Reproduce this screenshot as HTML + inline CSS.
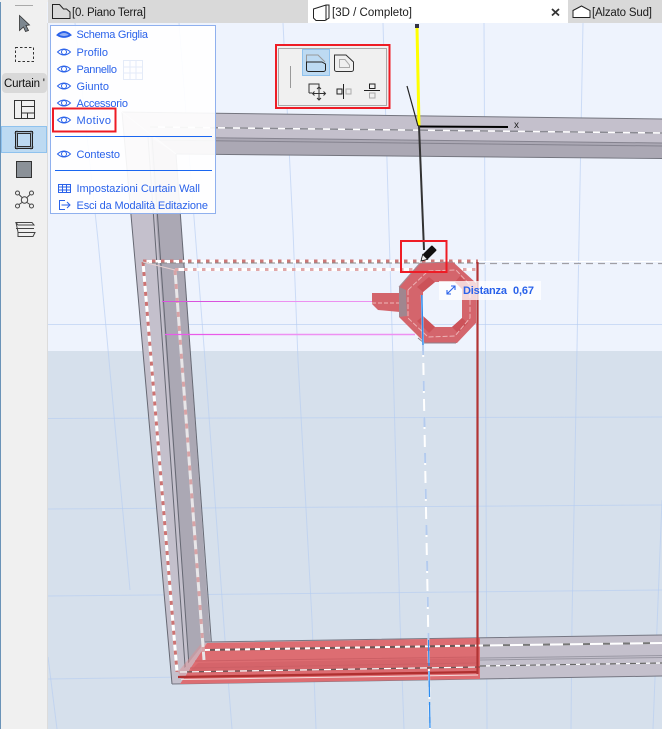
<!DOCTYPE html>
<html>
<head>
<meta charset="utf-8">
<style>
html,body{margin:0;padding:0;background:#eef3fd;width:662px;height:729px;overflow:hidden}
svg{display:block;position:absolute;left:0;top:0}
text{font-family:"Liberation Sans",sans-serif}
.m{font-size:11px;fill:#2a62ea}
.t{font-size:11.5px;fill:#1c1c1c}
</style>
</head>
<body>
<svg width="662" height="729" viewBox="0 0 662 729" xmlns="http://www.w3.org/2000/svg">
<rect width="662" height="729" fill="#eef3fd"/>
<rect y="351" width="662" height="378" fill="#d6e0ec"/>
<g stroke="#b4cbf2" stroke-width="1" stroke-opacity=".6" fill="none">
<path d="M75,23 L98,240 L130,590"/>
<path d="M48,657 L57,729"/>
<path d="M179,23 L205,360 L225,640 L232,729"/>
<path d="M283,23 L293,230 L298,360 L312,620 L316,729"/>
<path d="M383,23 L389,230 L393,360 L400,620 L404,729"/>
<path d="M484,23 L485,230 L487,729"/>
<path d="M583,23 L572,620 L571,729"/>
<path d="M662,500 L653,729"/>
<path d="M48,324.500 H662"/>
<path d="M48,418.500 L662,417"/>
<path d="M48,509 L662,505"/>
<path d="M48,596 L662,590"/>
<path d="M48,679 L662,670"/>
</g>
<!-- top band -->
<polygon points="122,112 662,119 662,158 176,154" fill="#c4c0cc"/>
<polygon points="150,137 662,143 662,158 176,154" fill="#aba8b4"/>
<path d="M122,112 L662,119" stroke="#74757f" stroke-width="1" fill="none"/>
<path d="M176,154 L662,158.500" stroke="#74757f" stroke-width="1" fill="none"/>
<path d="M150,137 L662,143 M150,140 L662,146" stroke="#85838f" stroke-width="1" fill="none"/>
<path d="M150,127 L662,133" stroke="#fff" stroke-width="1.500" fill="none"/>
<path d="M150,127 L662,133" stroke="#8a8a92" stroke-width="1.500" stroke-dasharray="8 7" fill="none"/>
<!-- left leg -->
<polygon points="122,112 176,154 211,650 213,676 172,684" fill="#c4c0cc"/>
<polygon points="150,137 176,154 211,650 213,676 190,680" fill="#aba8b4"/>
<g stroke="#666873" stroke-width="1" fill="none">
<path d="M122,112 L172,684"/>
<path d="M176,154 L213,665"/>
<path d="M148,137 L186,680 M152,137 L190,680"/>
</g>
<path d="M122,112 L176,154" stroke="#d9d6de" stroke-width="1"/>
<!-- bottom band -->
<polygon points="205,642 662,635 662,676 172,684" fill="#c4c0cc"/>
<path d="M205,642 L662,635 M172,684 L662,676" stroke="#767783" stroke-width="1" fill="none"/>
<path d="M480,658 L662,655.500 M480,660 L662,657.500" stroke="#9a98a4" stroke-width="1" fill="none"/>
<path d="M480,666 L662,663" stroke="#fff" stroke-width="1.200" fill="none"/>
<path d="M480,666 L662,663" stroke="#666" stroke-width="1.200" stroke-dasharray="6 4" fill="none"/>
<path d="M480,645.500 L662,643" stroke="#fff" stroke-width="2" fill="none"/>
<path d="M480,645.500 L662,643" stroke="#777" stroke-width="2" stroke-dasharray="7 13" stroke-dashoffset="-3" fill="none"/>
<!-- red floor -->
<polygon points="207,643 480,638 480,679 180,684" fill="#dd6d72"/>
<polygon points="198,663 478,658 478,668 188,673" fill="#d5646a"/>
<path d="M195,661 L478,657 M190,668 L478,663" stroke="#cc5f65" stroke-width="1" fill="none"/>
<polygon points="207,643 182,680 178,672 200,645" fill="#e08d91" opacity=".45"/>
<path d="M205,650 L480,645.500" stroke="#6a5555" stroke-width="2" fill="none"/>
<path d="M205,650 L480,645.500" stroke="#fff" stroke-width="2" stroke-dasharray="5 5" fill="none"/>
<path d="M180,672 L480,667" stroke="#6a5555" stroke-width="1.200" fill="none"/>
<path d="M180,672 L480,667" stroke="#fff" stroke-width="1.200" stroke-dasharray="7 5" fill="none"/>
<path d="M178,677 L478,672" stroke="#b03030" stroke-width="2.200" fill="none"/>
<path d="M181,679.500 L478,675" stroke="#f4dcdc" stroke-width="1" fill="none"/>
<!-- dashed outline -->
<path d="M143,262 L177,672" stroke="#fff" stroke-width="3" fill="none"/>
<path d="M143,262 L177,672" stroke="#cc7373" stroke-width="3" stroke-dasharray="4 6" fill="none"/>
<path d="M175,270 L204,660" stroke="#e8e6e8" stroke-width="3" fill="none"/>
<path d="M175,270 L204,660" stroke="#d8a3a6" stroke-width="3" stroke-dasharray="5 9" fill="none"/>
<path d="M143,261.500 H478" stroke="#fff" stroke-width="3" fill="none"/>
<path d="M478,261.500 H662" stroke="#fff" stroke-width="1" fill="none"/>
<path d="M478,264 H662" stroke="#eef3fd" stroke-width="2" fill="none"/>
<path d="M478,263.500 H662" stroke="#a09fa6" stroke-width="1.200" stroke-dasharray="7 5" fill="none"/>
<path d="M143,263 H478" stroke="#888" stroke-width="1" stroke-dasharray="6 3" fill="none"/>
<path d="M143,261 H478" stroke="#cc7878" stroke-width="3" stroke-dasharray="3.500 5.500" fill="none"/>
<path d="M175,269.500 H478" stroke="#fff" stroke-width="3" fill="none"/>
<path d="M175,269.500 H478" stroke="#e0a8aa" stroke-width="3" stroke-dasharray="3.500 5.500" fill="none"/>
<path d="M143,262 L175,270" stroke="#e6cfd0" stroke-width="1" fill="none"/>
<!-- pink -->
<path d="M162,301.500 H240" stroke="#d952dd" stroke-width="1"/>
<path d="M240,301.500 H372" stroke="#ec90f0" stroke-width="1"/>
<path d="M165,334.500 H250" stroke="#e95ae9" stroke-width="1.200"/>
<path d="M250,334.500 H415" stroke="#ee90f2" stroke-width="1.500"/>
<!-- vertical red -->
<path d="M477.500,262 V674" stroke="#b23434" stroke-width="2.200"/>
<!-- profile -->
<polygon points="372,293 400,293 400,312 378,310 372,304" fill="#d3646b"/>
<path d="M372,303 H400" stroke="#efb7ba" stroke-width="1" stroke-dasharray="4 2"/>
<path fill-rule="evenodd" d="M420,263 L453,262 L476,283 L476,323 L457,343 L425,343 L399,317 L399,287 Z M435,282 L455,282 L462,289 L462,318 L452,327 L435,327 L423,316 L423,292 Z" fill="#d4656c"/>
<polygon points="399,287 406,290 407,316 399,317" fill="#a0868f"/>
<polygon points="423,292 417,287 429,277 435,282" fill="#cc5259"/>
<polygon points="462,318 468,323 458,333 452,327" fill="#cc5259"/>
<polygon points="423,316 417,321 429,333 435,327" fill="#cc5259"/>
<polygon points="462,289 468,284 460,276 455,282" fill="#cc5259"/>
<path d="M408,290 L428,271 L456,270 L470,285 L470,318 L455,336 L428,337 L408,318 Z" fill="none" stroke="#edb3b6" stroke-width="1" stroke-dasharray="5 2"/>
<path d="M456,343 L424,343 L418,338" stroke="#8d7f8a" stroke-width="1" fill="none"/>
<path d="M399,287 L420,263 L453,262" stroke="#a48d96" stroke-width="1" fill="none"/>
<!-- blue axis -->
<path d="M421.800,295 L423,345" stroke="#fff" stroke-width="2"/>
<path d="M423,345 L430,729" stroke="#fff" stroke-width="2" stroke-dasharray="12 6"/>
<path d="M421.800,295 L423,345" stroke="#2c8cf0" stroke-width="1.500"/>
<path d="M423,345 L428.500,640" stroke="#b4cbee" stroke-width="2" stroke-dasharray="10 26"/>
<path d="M428.500,640 L430,729" stroke="#2c8cf0" stroke-width="1.300" stroke-dasharray="26 5"/>
<!-- axes -->
<path d="M417,28 L419,126" stroke="#ffff00" stroke-width="3"/>
<rect x="415" y="24" width="4" height="4" fill="#334"/>
<path d="M407,86 L418,126" stroke="#222" stroke-width="1.200"/>
<path d="M418,126.500 L508,127" stroke="#000" stroke-width="2"/>
<path d="M419,126 L424,250" stroke="#333" stroke-width="2"/>
<text x="514" y="128" font-size="10" fill="#222">x</text>
<!-- pencil -->
<g transform="translate(428,254) rotate(45)">
<rect x="-3.500" y="-9" width="7" height="13" rx="1" fill="#111"/>
<polygon points="-3.500,4 3.500,4 0,10" fill="#eee" stroke="#111" stroke-width=".8"/>
</g>
<rect x="401" y="241" width="45.500" height="31" fill="none" stroke="#ee1c25" stroke-width="2"/>
<!-- tooltip -->
<rect x="439" y="281" width="102" height="19" fill="#fff" opacity=".75"/>
<path d="M447,294 L455,286 M451,286 H455 V290 M447,290 V294 H451" stroke="#2a62ea" stroke-width="1.100" fill="none"/>
<text x="463" y="294" font-size="11" font-weight="bold" fill="#2a62ea" textLength="44">Distanza</text>
<text x="513" y="294" font-size="11" font-weight="bold" fill="#2a62ea" textLength="21">0,67</text>
<!-- tool palette -->
<rect x="276" y="45" width="113.500" height="63" fill="#f0f0f0" stroke="#ee1c25" stroke-width="2"/>
<rect x="278.500" y="48.500" width="108" height="57" fill="#f0f0f0" stroke="#a9a9a9" stroke-width="1"/>
<rect x="302.500" y="49.500" width="27" height="26" fill="#bddaf2" stroke="#8fc2ee"/>
<path d="M290.500,66 V88" stroke="#999" stroke-width="1"/>
<path d="M306.500,62 V55 H318 L325,62" fill="none" stroke="#999" stroke-width="1"/>
<path d="M306.500,62 H322 L325.500,64 V69.500 a2,2 0 0 1 -2,2 H308.500 a2,2 0 0 1 -2,-2 Z" fill="none" stroke="#222" stroke-width="1"/>
<path d="M334.500,55 H346 L353.500,62 V69.500 a2,2 0 0 1 -2,2 H336.500 a2,2 0 0 1 -2,-2 Z" fill="none" stroke="#333" stroke-width="1"/>
<path d="M339.500,59.500 H345 L349.500,65 V67.500 H339.500 Z" fill="none" stroke="#aaa" stroke-width="1"/>
<path d="M309,93 V84 H319 V88 M309,93 H312" fill="none" stroke="#333" stroke-width="1"/>
<path d="M319,87 V100 M312.500,93.500 H325.500 M317,89 L319,87 L321,89 M317,98 L319,100 L321,98 M314.500,91.500 L312.500,93.500 L314.500,95.500 M323.500,91.500 L325.500,93.500 L323.500,95.500" fill="none" stroke="#333" stroke-width="1"/>
<path d="M343.500,84 V99" stroke="#222"/>
<rect x="337" y="89" width="5" height="5" fill="none" stroke="#222"/>
<rect x="346" y="89" width="5" height="5" fill="none" stroke="#aaa"/>
<path d="M364,90.500 H380" stroke="#222"/>
<rect x="369.500" y="84" width="5.500" height="4.500" fill="none" stroke="#222"/>
<rect x="369.500" y="93" width="5.500" height="5" fill="none" stroke="#aaa"/>
<!-- left toolbar -->
<rect x="0" y="0" width="47" height="729" fill="#f0f0f0"/>
<rect x="0" y="0" width="1" height="729" fill="#6a93b8"/>
<rect x="47" y="23" width="1" height="706" fill="#dcdcdc"/>
<path d="M15,5.500 H33" stroke="#aaa"/>
<polygon points="19.500,15.500 29.500,25 26,25.500 28.500,30.500 25.500,31.500 23.500,27 19.500,30.500" fill="#7d8790" stroke="#333" stroke-width=".8"/>
<rect x="15.500" y="47.500" width="18" height="14" fill="none" stroke="#333" stroke-dasharray="2.500 2"/>
<rect x="2" y="73" width="45" height="20" rx="4" fill="#d9d9d9"/>
<text x="4" y="87" font-size="11.500" fill="#111" textLength="41">Curtain '</text>
<path d="M14.500,100.500 H34.500 V118.500 H14.500 Z M21.500,100.500 V118.500 M21.500,106.500 H34.500 M21.500,113 H34.500 M27.500,113 V118.500" fill="none" stroke="#333"/>
<rect x="1.500" y="126.500" width="45" height="26" fill="#bddaf2" stroke="#8fc2ee"/>
<rect x="15.500" y="131.500" width="17" height="17" fill="none" stroke="#222"/>
<rect x="17.500" y="133.500" width="13" height="13" fill="#bddaf2" stroke="#222"/>
<path d="M14,133 H34 M14,147 H34 M17,130 V150 M31,130 V150" stroke="#555" stroke-width=".5" fill="none"/>
<rect x="16.500" y="161.500" width="15" height="16" fill="#8b9198" stroke="#333"/>
<g fill="none" stroke="#444">
<circle cx="24.500" cy="200" r="3.200"/>
<circle cx="17.500" cy="193" r="2"/><circle cx="31.500" cy="193" r="2"/>
<circle cx="17.500" cy="206" r="2"/><circle cx="31.500" cy="206" r="2"/>
<path d="M19,194.500 L22,197.500 M30,194.500 L27,197.500 M19,204.500 L22,202.500 M30,204.500 L27,202.500"/>
<path d="M16,222.500 H32 L34,225 H18 Z M16,222.500 L18,232 M16,228.500 H34 M18,232.500 H35 L33,236.500 H18 Z" />
</g>
<!-- tabs -->
<rect x="48" y="0" width="614" height="23" fill="#d9d9d9"/>
<rect x="0" y="0" width="48" height="2" fill="#f0f0f0"/>
<rect x="308" y="0" width="260" height="23" fill="#fff"/>
<path d="M52.500,18.500 V4.500 H59.500 L63.500,9 H66.500 L70,12 V18.500 Z" fill="none" stroke="#222"/>
<text class="t" x="72" y="16" textLength="74">[0. Piano Terra]</text>
<path d="M313.500,9 L326,5 H329 V18 L325,20.500 H316 L313.500,18 Z M326,5 V20.500" fill="#fff" stroke="#222"/>
<text class="t" x="332" y="16" textLength="80">[3D / Completo]</text>
<path d="M552,9 L559,15.500 M559,9 L552,15.500" stroke="#333" stroke-width="1.800"/>
<path d="M573,10.500 L581.500,6 L590,10.500 V17.500 H573 Z" fill="#fff" stroke="#222"/>
<text class="t" x="592" y="16" textLength="60">[Alzato Sud]</text>
<!-- menu -->
<rect x="50.500" y="25.500" width="165" height="188" fill="#fff" fill-opacity=".92" stroke="#8fb0ee"/>
<g stroke="#e4ebf8" fill="none">
<path d="M123.500,60.500 H142.500 V79.500 H123.500 Z M130,60.500 V79.500 M136,60.500 V79.500 M123.500,67 H142.500 M123.500,73 H142.500"/>
</g>
<g fill="none" stroke="#2a62ea">
<path d="M57.500,35 Q64,29 70.500,35 Q64,39 57.500,35 Z" stroke-width="1.800" fill="#2a62ea" fill-opacity=".5"/>
<path d="M57.500,52 Q64,46 70.500,52 Q64,58 57.500,52 Z"/><circle cx="64" cy="52" r="2.500"/>
<path d="M57.500,69 Q64,63 70.500,69 Q64,75 57.500,69 Z"/><circle cx="64" cy="69" r="2.500"/>
<path d="M57.500,86 Q64,80 70.500,86 Q64,92 57.500,86 Z"/><circle cx="64" cy="86" r="2.500"/>
<path d="M57.500,103 Q64,97 70.500,103 Q64,109 57.500,103 Z"/><circle cx="64" cy="103" r="2.500"/>
<path d="M57.500,120 Q64,114 70.500,120 Q64,126 57.500,120 Z"/><circle cx="64" cy="120" r="2.500"/>
<path d="M57.500,154 Q64,148 70.500,154 Q64,160 57.500,154 Z"/><circle cx="64" cy="154" r="2.500"/>
<path d="M58.500,184.500 H70.500 V192.500 H58.500 Z M58.500,187 H70.500 M58.500,190 H70.500 M62.500,184.500 V192.500 M66.500,184.500 V192.500"/>
<path d="M65,200.500 H59.500 V209.500 H65 M61.500,205 H70 M67,202 L70,205 L67,208"/>
</g>
<g>
<text class="m" x="76.500" y="38" textLength="71.500">Schema Griglia</text>
<text class="m" x="76.500" y="56" textLength="31.500">Profilo</text>
<text class="m" x="76.500" y="73" textLength="40.500">Pannello</text>
<text class="m" x="76.500" y="90" textLength="32.500">Giunto</text>
<text class="m" x="76.500" y="107" textLength="51.500">Accessorio</text>
<text class="m" x="76.500" y="124" textLength="34.500">Motivo</text>
<text class="m" x="76.500" y="158" textLength="43.500">Contesto</text>
<text class="m" x="76.500" y="192" textLength="123.500">Impostazioni Curtain Wall</text>
<text class="m" x="76.500" y="209" textLength="131.500">Esci da Modalità Editazione</text>
</g>
<path d="M55,136.500 H212 M55,170.500 H212" stroke="#1a66f0" stroke-width="1"/>
<rect x="53" y="108.500" width="62.500" height="23" fill="none" stroke="#ee1c25" stroke-width="2"/>
</svg>
</body>
</html>
